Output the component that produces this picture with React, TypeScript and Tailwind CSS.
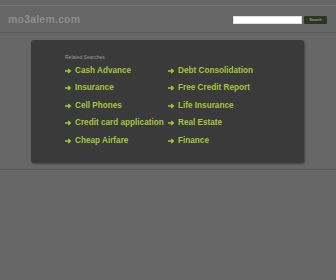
const left = ["Cash Advance", "Insurance", "Cell Phones", "Credit card application", "Cheap Airfare"];
const right = ["Debt Consolidation", "Free Credit Report", "Life Insurance", "Real Estate", "Finance"];

const Arrow = () => (
  <svg width="7" height="6" viewBox="0 0 7 6" className="mr-[3px] shrink-0">
    <path d="M0 3h5M3.2 1l2.2 2-2.2 2" stroke="#a9c43c" strokeWidth="1.3" fill="none" />
  </svg>
);

const LinkItem = ({ label }: { label: string }) => (
  <a href="#" className="flex items-center h-[17.5px] text-[#a9c43c] font-bold text-[8.2px] leading-none">
    <Arrow />
    {label}
  </a>
);

export default function App() {
  return (
    <div className="w-[336px] h-[280px] bg-[#666666] font-['Liberation_Sans',Arial,sans-serif] overflow-hidden">
      <div className="h-[5px]" />
      <div className="border-t border-[#757575] h-[27px] flex items-center justify-between pl-[8px] pr-[9px]">
        <span className="text-[#8e8e8e] font-bold text-[10.5px] tracking-[0.2px] mt-[1px]">mo3alem.com</span>
        <form className="flex items-center gap-[2px] mt-[1px]">
          <input className="w-[69px] h-[8px] bg-white border border-[#dddddd] outline-none" />
          <button type="button" className="w-[23px] h-[8px] bg-[#2c3525] text-[#b9c79c] text-[4px] leading-none rounded-[1px]">
            Search
          </button>
        </form>
      </div>
      <div className="border-t border-[#5a5a5a] h-[1px] bg-[#6c6c6c]" />
      <div className="ml-[31px] mt-[7px] w-[273px] h-[123px] bg-[#3a3a3a] rounded-[3px] shadow-[1px_1px_2px_rgba(0,0,0,0.35)] pl-[34px] pt-[15px]">
        <div className="text-[#9a9a9a] text-[5px] leading-none mb-[2px]">Related Searches</div>
        <div className="grid grid-cols-[103px_1fr]">
          <div className="flex flex-col">
            {left.map((l) => (
              <LinkItem key={l} label={l} />
            ))}
          </div>
          <div className="flex flex-col">
            {right.map((r) => (
              <LinkItem key={r} label={r} />
            ))}
          </div>
        </div>
      </div>
      <div className="mt-[6px] border-t border-[#585858] h-[2px] bg-[#6a6a6a]" />
    </div>
  );
}
